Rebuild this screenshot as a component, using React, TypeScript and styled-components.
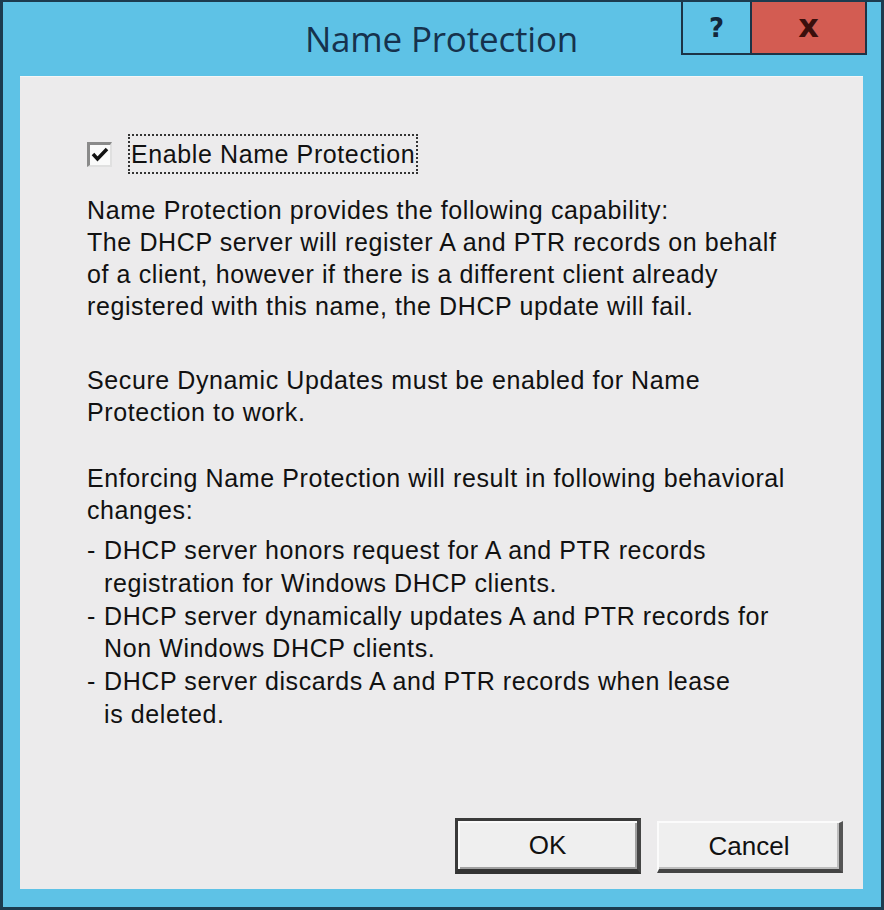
import styled, { createGlobalStyle } from "styled-components";

const GlobalStyle = createGlobalStyle`
  html, body {
    margin: 0;
    padding: 0;
    background: #5ec2e6;
  }
  * {
    box-sizing: border-box;
  }
`;

const Window = styled.div`
  width: 884px;
  height: 910px;
  display: flex;
  flex-direction: column;
  background: #5ec2e6;
  border: 3px solid #1c3b4f;
  border-top-width: 2px;
  padding: 0 18px 18px 17px;
`;

const TitleBar = styled.div`
  height: 74px;
  flex-shrink: 0;
  display: grid;
  grid-template-columns: 1fr auto 1fr;
  align-items: start;
`;

const Title = styled.h1`
  grid-column: 2;
  margin: 15px 0 0;
  font-family: "Open Sans", "Noto Sans", sans-serif;
  font-weight: 400;
  font-size: 35px;
  line-height: 44px;
  color: #16324d;
  letter-spacing: -0.2px;
`;

const Controls = styled.div`
  grid-column: 3;
  justify-self: end;
  display: flex;
  margin-right: -4px;
  border: 2px solid #1c3346;
  border-top: none;
`;

const ControlButton = styled.div<{ $close?: boolean; $w: number }>`
  width: ${({ $w }) => $w}px;
  height: 51px;
  display: flex;
  align-items: center;
  justify-content: center;
  background: ${({ $close }) => ($close ? "#d35c52" : "#5ec2e6")};
  border-left: ${({ $close }) => ($close ? "2px solid #1c3346" : "none")};
  color: ${({ $close }) => ($close ? "#3a0f0c" : "#13263a")};
  font-family: "DejaVu Sans", sans-serif;
  font-weight: 700;
  font-size: ${({ $close }) => ($close ? "32px" : "26px")};
  padding-bottom: ${({ $close }) => ($close ? "4px" : "0")};
`;

const Client = styled.div`
  flex: 1;
  background: #ecebec;
  border-top: 1px solid #f6f6f6;
  display: flex;
  flex-direction: column;
  padding: 57px 20px 15px 67px;
  font-family: "Liberation Sans", Arial, sans-serif;
  font-size: 25px;
  letter-spacing: 0.6px;
  color: #111;
`;

const CheckRow = styled.label`
  display: flex;
  align-items: center;
  gap: 16px;
  height: 40px;
`;

const Box = styled.span`
  width: 25px;
  height: 25px;
  display: flex;
  align-items: center;
  justify-content: center;
  background: #fafafa;
  border-top: 3px solid #8a8a8a;
  border-left: 3px solid #8a8a8a;
  border-right: 2px solid #e0e0e0;
  border-bottom: 2px solid #e0e0e0;
`;

const FocusLabel = styled.span`
  border: 2px dotted #333;
  padding: 4px 1px 4px 1px;
  line-height: 28px;
`;

const Para = styled.p<{ $gap: number }>`
  margin: ${({ $gap }) => $gap}px 0 0;
  line-height: 32px;
`;

const List = styled.ul`
  list-style: none;
  margin: 8px 0 0;
  padding: 0;
  line-height: 32.8px;
`;

const Item = styled.li`
  display: flex;
  gap: 10px;

  &::before {
    content: "-";
    width: 7px;
  }
`;

const Footer = styled.div`
  margin-top: auto;
  display: flex;
  justify-content: flex-end;
  gap: 16px;
`;

const Button = styled.button<{ $default?: boolean }>`
  width: 186px;
  height: ${({ $default }) => ($default ? "56px" : "52px")};
  margin-top: ${({ $default }) => ($default ? "0" : "3px")};
  background: #efefef;
  font-family: "Liberation Sans", Arial, sans-serif;
  font-size: 26px;
  color: #111;
  border-style: solid;
  border-width: ${({ $default }) => ($default ? "3px 4px 5px 3px" : "2px 4px 4px 2px")};
  border-color: ${({ $default }) =>
    $default ? "#3a3a3a #444 #333 #3a3a3a" : "#fbfbfb #555 #444 #fbfbfb"};
  box-shadow: ${({ $default }) =>
    $default ? "inset 2px 2px 0 #fafafa, inset -2px -2px 0 #a0a0a0" : "inset -2px -2px 0 #bdbdbd"};
  padding: 0;
`;

export default function App() {
  return (
    <>
      <GlobalStyle />
      <Window>
        <TitleBar>
          <Title>Name Protection</Title>
          <Controls>
            <ControlButton $w={67}>?</ControlButton>
            <ControlButton $w={115} $close>
              x
            </ControlButton>
          </Controls>
        </TitleBar>
        <Client>
          <CheckRow>
            <Box>
              <svg width="18" height="16" viewBox="0 0 18 16">
                <path d="M2 7 L6.5 12 L16 2" fill="none" stroke="#111" strokeWidth="3.5" />
              </svg>
            </Box>
            <FocusLabel>Enable Name Protection</FocusLabel>
          </CheckRow>
          <Para $gap={20}>
            Name Protection provides the following capability:
            <br />
            The DHCP server will register A and PTR records on behalf
            <br />
            of a client, however if there is a different client already
            <br />
            registered with this name, the DHCP update will fail.
          </Para>
          <Para $gap={42}>
            Secure Dynamic Updates must be enabled for Name
            <br />
            Protection to work.
          </Para>
          <Para $gap={34}>
            Enforcing Name Protection will result in following behavioral
            <br />
            changes:
          </Para>
          <List>
            <Item>
              <span>
                DHCP server honors request for A and PTR records
                <br />
                registration for Windows DHCP clients.
              </span>
            </Item>
            <Item>
              <span>
                DHCP server dynamically updates A and PTR records for
                <br />
                Non Windows DHCP clients.
              </span>
            </Item>
            <Item>
              <span>
                DHCP server discards A and PTR records when lease
                <br />
                is deleted.
              </span>
            </Item>
          </List>
          <Footer>
            <Button $default>OK</Button>
            <Button>Cancel</Button>
          </Footer>
        </Client>
      </Window>
    </>
  );
}
